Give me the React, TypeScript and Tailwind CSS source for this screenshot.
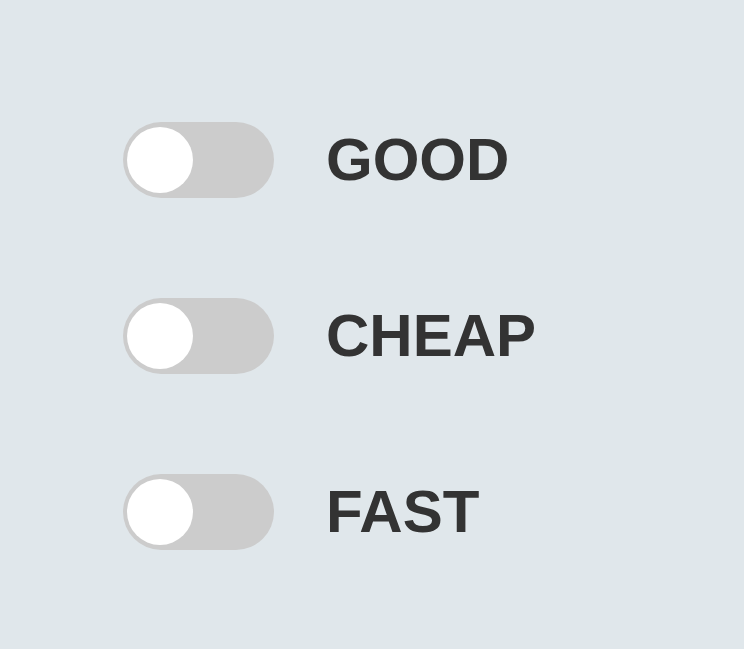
import React from "react";

function Toggle() {
  return (
    <div className="w-[151px] h-[76px] rounded-full bg-[#cccccc] flex items-center px-[4px] shrink-0">
      <div className="w-[66px] h-[66px] rounded-full bg-white" />
    </div>
  );
}

export default function App() {
  const items = ["GOOD", "CHEAP", "FAST"];
  return (
    <div className="w-[744px] h-[649px] bg-[#e0e7eb] pl-[123px] pt-[122px] flex flex-col gap-[100px]" style={{ fontFamily: '"Liberation Sans", Arial, sans-serif' }}>
      {items.map((t) => (
        <div key={t} className="flex items-center gap-[52px] h-[76px]">
          <Toggle />
          <span className="text-[60px] font-bold text-[#333333] leading-none">{t}</span>
        </div>
      ))}
    </div>
  );
}
